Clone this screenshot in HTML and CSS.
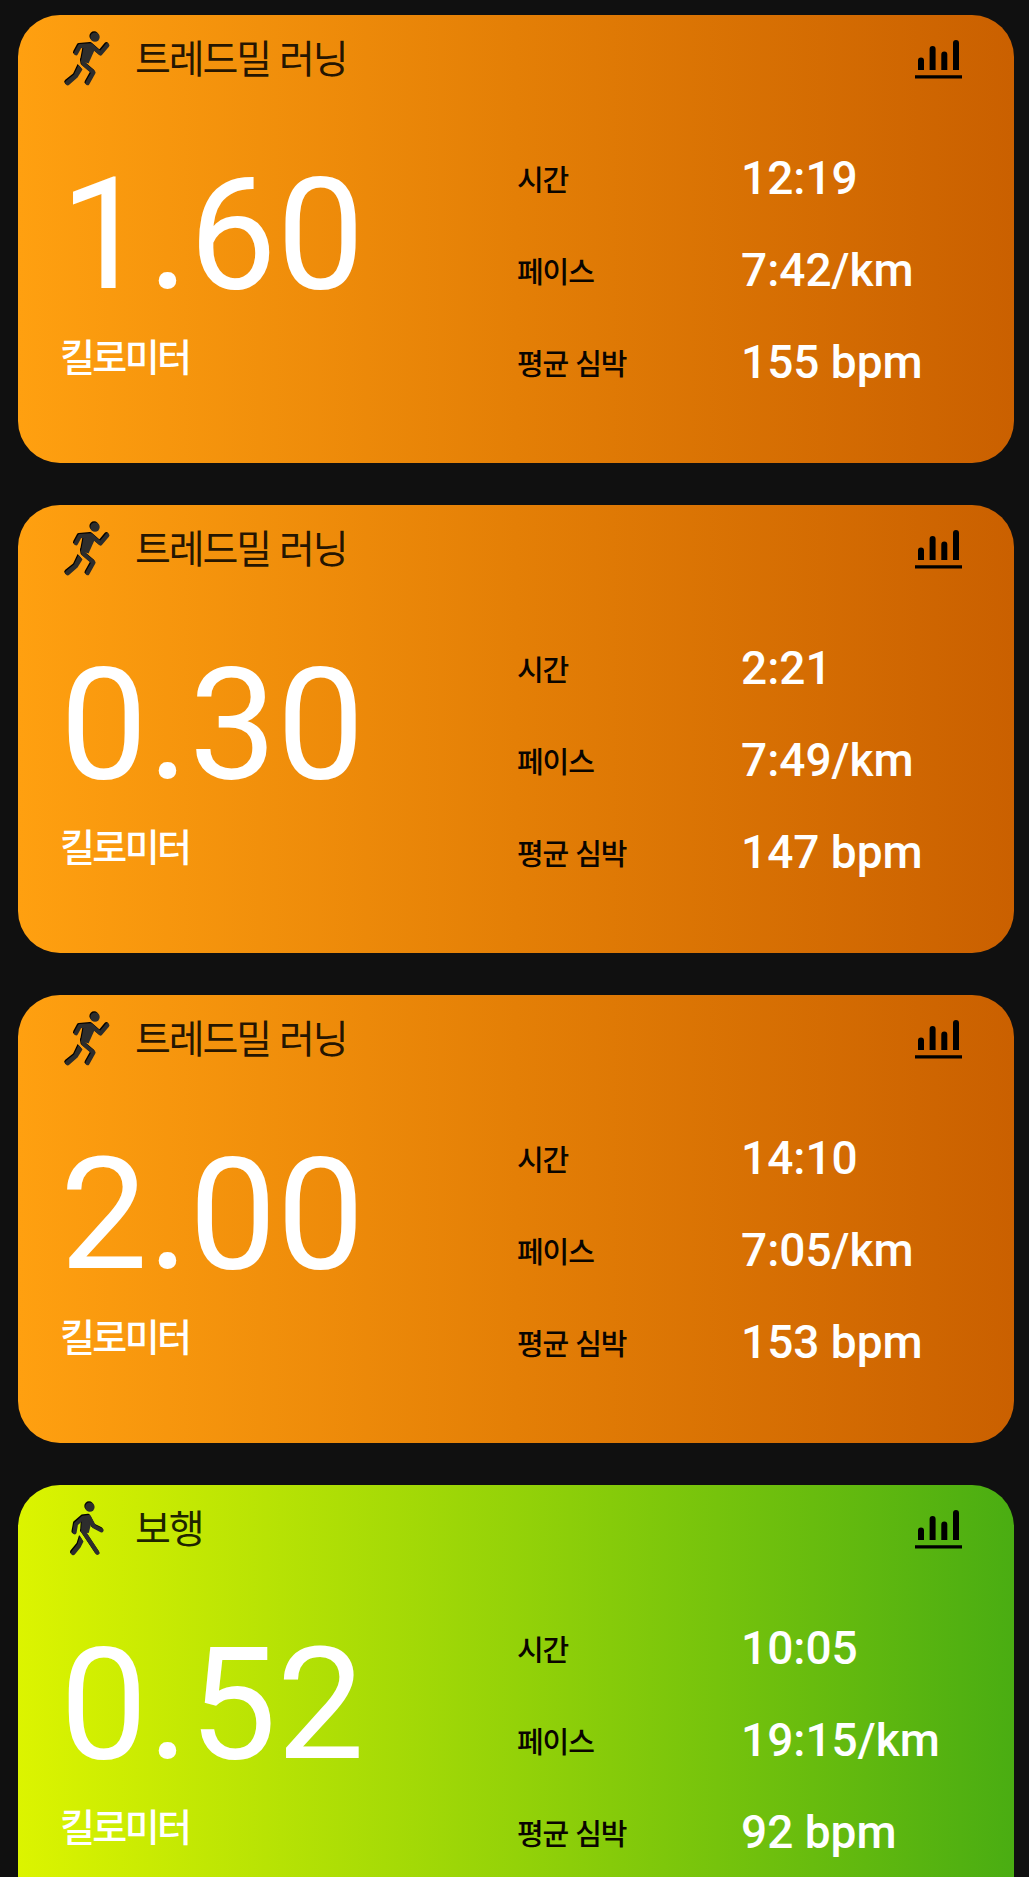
FILE: index.html
```
<!DOCTYPE html>
<html lang="ko">
<head>
<meta charset="utf-8">
<title>운동 기록</title>
<link rel="stylesheet" href="styles.css">
</head>
<body>
<svg class="defs" aria-hidden="true">
  <symbol id="run-shape" viewBox="0 0 54 60">
    <circle cx="34.5" cy="6.6" r="4.7"/>
    <path d="M23.500 14.200 31 13.300 35 17.500 28 33 20.500 30.500Z"/>
    <path class="limb" d="M15.500 22.700 19.300 15.700 30.500 14.800 40 23 46.800 14.800M22.500 30.500 23 33.500 33 42 27 52.600"/>
    <path d="M18 34.500 22 39 17 47 9 54A2.200 2.200 0 0 1 5.400 50.500L13.500 44Z"/>
  </symbol>
  <symbol id="walk-shape" viewBox="0 0 54 60">
    <circle cx="29.4" cy="6.600" r="4.700"/>
    <path d="M21.500 15.700 29 15 31.500 20 28.200 32.500 20.500 32Z"/>
    <path class="limb" d="M14 31.800 15.500 23.500 22.500 17.300 28.500 16.500 33.500 26 41 29.800M22.800 31 26.500 36.500 37 52.300"/>
    <path d="M19.500 35.500 23 41 20 47 14.500 53.700A2.200 2.200 0 0 1 10.800 51.200L17 43.500Z"/>
  </symbol>
  <symbol id="chart" viewBox="0 0 48 40">
    <path d="M3 30V20.500a3 3 0 0 1 6 0V30ZM14.600 30V9a3 3 0 0 1 6 0V30ZM26.300 30V14.500a3 3 0 0 1 6 0V30ZM38 30V3a3 3 0 0 1 6 0V30ZM0 35.200H47V38.400H0Z"/>
  </symbol>
</svg>
<main class="feed">
  <article class="card card--run">
    <header class="card__head">
      <svg class="activity" viewBox="0 0 54 60"><use class="activity__edge" href="#run-shape" x="-.4" y="-.6" width="54" height="60"/><use class="activity__fill" href="#run-shape" x=".5" y=".5" width="54" height="60"/></svg>
      <h2 class="card__title">트레드밀 러닝</h2>
      <svg class="chart"><use href="#chart"/></svg>
    </header>
    <div class="card__body">
      <div class="distance"><div class="distance__value">1.60</div><div class="distance__unit">킬로미터</div></div>
      <dl class="stats"><dt>시간</dt><dd>12:19</dd><dt>페이스</dt><dd>7:42/km</dd><dt>평균 심박</dt><dd>155 bpm</dd></dl>
    </div>
  </article>
  <article class="card card--run">
    <header class="card__head">
      <svg class="activity" viewBox="0 0 54 60"><use class="activity__edge" href="#run-shape" x="-.4" y="-.6" width="54" height="60"/><use class="activity__fill" href="#run-shape" x=".5" y=".5" width="54" height="60"/></svg>
      <h2 class="card__title">트레드밀 러닝</h2>
      <svg class="chart"><use href="#chart"/></svg>
    </header>
    <div class="card__body">
      <div class="distance"><div class="distance__value">0.30</div><div class="distance__unit">킬로미터</div></div>
      <dl class="stats"><dt>시간</dt><dd>2:21</dd><dt>페이스</dt><dd>7:49/km</dd><dt>평균 심박</dt><dd>147 bpm</dd></dl>
    </div>
  </article>
  <article class="card card--run">
    <header class="card__head">
      <svg class="activity" viewBox="0 0 54 60"><use class="activity__edge" href="#run-shape" x="-.4" y="-.6" width="54" height="60"/><use class="activity__fill" href="#run-shape" x=".5" y=".5" width="54" height="60"/></svg>
      <h2 class="card__title">트레드밀 러닝</h2>
      <svg class="chart"><use href="#chart"/></svg>
    </header>
    <div class="card__body">
      <div class="distance"><div class="distance__value">2.00</div><div class="distance__unit">킬로미터</div></div>
      <dl class="stats"><dt>시간</dt><dd>14:10</dd><dt>페이스</dt><dd>7:05/km</dd><dt>평균 심박</dt><dd>153 bpm</dd></dl>
    </div>
  </article>
  <article class="card card--walk">
    <header class="card__head">
      <svg class="activity" viewBox="0 0 54 60"><use class="activity__edge" href="#walk-shape" x="-.4" y="-.6" width="54" height="60"/><use class="activity__fill" href="#walk-shape" x=".5" y=".5" width="54" height="60"/></svg>
      <h2 class="card__title">보행</h2>
      <svg class="chart"><use href="#chart"/></svg>
    </header>
    <div class="card__body">
      <div class="distance"><div class="distance__value">0.52</div><div class="distance__unit">킬로미터</div></div>
      <dl class="stats"><dt>시간</dt><dd>10:05</dd><dt>페이스</dt><dd>19:15/km</dd><dt>평균 심박</dt><dd>92 bpm</dd></dl>
    </div>
  </article>
</main>
</body>
</html>
```
FILE: styles.css
```
* { box-sizing: border-box; margin: 0; padding: 0; }

body {
  height: 1877px;
  overflow: hidden;
  background: #101010;
  font-family: Roboto, "Noto Sans CJK KR", sans-serif;
}

.defs { display: none; }

.feed {
  display: flex;
  flex-direction: column;
  gap: 42px;
  padding: 15px 15px 0 18px;
}

.card {
  flex: none;
  height: 448px;
  border-radius: 42px;
}

.card--run { background: linear-gradient(90deg, #ffa010, #e47f06 50%, #ca6000); }
.card--walk { background: linear-gradient(90deg, #dcf400, #94d208 50%, #4aad12); }

.card__head {
  display: flex;
  align-items: flex-start;
  height: 117px;
  padding: 11px 51px 0 42px;
}

.activity { width: 54px; height: 60px; margin-top: 4px; }
.activity__edge { fill: #000; stroke: #000; }
.activity__fill { fill: #2d2d2d; stroke: #2d2d2d; }

.limb {
  fill: none;
  stroke-width: 4.2;
  stroke-linecap: round;
  stroke-linejoin: round;
}
circle, path:not(.limb) { stroke: none; }

.card__title {
  flex: 1;
  padding-left: 21px;
  font: 400 39px/60px "Noto Sans CJK KR", sans-serif;
  letter-spacing: -2.1px;
  color: rgba(0, 0, 0, .85);
}

.chart {
  width: 48px;
  height: 40px;
  margin-top: 14px;
}

.card__body {
  display: grid;
  grid-template-columns: 499px 1fr;
}

.distance { padding: 23px 0 0 42px; color: #fff; }
.distance__value {
  font-size: 156px;
  line-height: 160px;
  letter-spacing: .1px;
}
.distance__unit {
  margin-top: 15px;
  font: 500 38px/50px "Noto Sans CJK KR", sans-serif;
  letter-spacing: -2.6px;
}

.stats {
  display: grid;
  grid-template-columns: 224px 1fr;
  grid-auto-rows: 92px;
}
.stats dt {
  font: 500 29px/92px "Noto Sans CJK KR", sans-serif;
  letter-spacing: -1.1px;
  color: #0a0500;
}
.stats dd {
  font-size: 46px;
  font-weight: 500;
  line-height: 92px;
  color: #fff;
}
```
